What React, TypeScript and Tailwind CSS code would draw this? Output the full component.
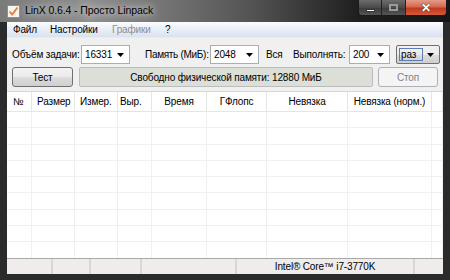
import React from "react";

/* ---------- Data ---------- */
const columns = [
  { label: "№", cls: "w-[25px] pl-[6px] justify-start" },
  { label: "Размер", cls: "w-[43px] pl-[5px] justify-start" },
  { label: "Измер.", cls: "w-[43px] pl-[5px] justify-start" },
  { label: "Выр.", cls: "w-[34px] pl-[2px] justify-start" },
  { label: "Время", cls: "w-[55px] justify-center" },
  { label: "ГФлопс", cls: "w-[60px] justify-center" },
  { label: "Невязка", cls: "w-[81px] justify-center" },
  { label: "Невязка (норм.)", cls: "w-[84px] justify-center" },
  { label: "", cls: "flex-1" },
];

const rowCount = 9;

/* ---------- Small parts ---------- */
function Arrow() {
  return (
    <svg width="7" height="4" viewBox="0 0 7 4" className="shrink-0">
      <path d="M0 0h7L3.5 4z" fill="#000" />
    </svg>
  );
}

function Combo({ value, cls }: { value: string; cls: string }) {
  return (
    <div
      className={`flex items-center h-[19px] bg-white border border-[#abadb3] pl-[3px] pr-[5px] ${cls}`}
    >
      <span className="flex-1">{value}</span>
      <Arrow />
    </div>
  );
}

function TitleIcon() {
  return (
    <svg width="13" height="13" viewBox="0 0 13 13">
      <rect x="0.5" y="0.5" width="12" height="12" fill="#f4f4f4" stroke="#8e8f8f" />
      <path d="M2.5 6.5l2.6 3L10.5 2.5" stroke="#f0782a" strokeWidth="1.8" fill="none" />
    </svg>
  );
}

/* ---------- Component ---------- */
export default function App() {
  return (
    <div
      className="w-[450px] h-[280px] flex flex-col bg-[#2b2b2b] overflow-hidden text-[10px] tracking-[-0.15px] text-black whitespace-nowrap"
      style={{ fontFamily: '"Liberation Sans", Arial, sans-serif' }}
    >
      {/* Title bar */}
      <div className="h-[22px] flex items-start bg-[linear-gradient(90deg,#7a7a7a_0%,#8f8f8f_20%,#555_55%,#1e1e1e_80%,#161616_100%)]">
        <div className="flex items-center h-[22px] pl-[7px] gap-[5px]">
          <TitleIcon />
          <span className="text-[10.5px] tracking-[-0.1px] [text-shadow:0_0_6px_#dcdcdc,0_0_10px_#d0d0d0]">
            LinX 0.6.4 - Просто Linpack
          </span>
        </div>
        <div className="flex-1" />
        {/* Caption buttons */}
        <div className="flex h-[16px] mr-[3px] border border-t-0 border-[#1a1a1a] rounded-b-[4px] overflow-hidden">
          <div className="w-[23px] flex items-center justify-center bg-[linear-gradient(180deg,#6d6d6d,#4a4a4a_50%,#3a3a3a_51%,#555)] border-r border-[#222]">
            <div className="w-[9px] h-[3px] mt-[5px] bg-white border border-[#333]" />
          </div>
          <div className="w-[24px] flex items-center justify-center bg-[linear-gradient(180deg,#6d6d6d,#4a4a4a_50%,#3a3a3a_51%,#555)] border-r border-[#222]">
            <div className="w-[9px] h-[7px] border-[2px] border-[#9a9a9a]" />
          </div>
          <div className="w-[40px] flex items-center justify-center bg-[linear-gradient(180deg,#e59a88,#d46a50_45%,#c2381c_55%,#d35a3a)]">
            <span className="text-white font-bold text-[12px] leading-none [text-shadow:0_0_1px_#333,0_0_1px_#333]">
              ✕
            </span>
          </div>
        </div>
      </div>

      {/* Client area */}
      <div className="mx-[7px] w-[436px] h-[252px] flex flex-col bg-[#f0f0f0]">
        {/* Menu */}
        <div className="h-[16px] flex items-center bg-[linear-gradient(180deg,#fbfcfe,#e6ecf6_60%,#dae2f0)] border-b border-[#e8ecf2]">
          <span className="w-[37px] pl-[6px]">Файл</span>
          <span className="w-[62px] pl-[6px]">Настройки</span>
          <span className="w-[53px] pl-[6px] text-[#8d8d8d]">Графики</span>
          <span className="pl-[6px]">?</span>
        </div>

        {/* Row 1 */}
        <div className="flex items-center mt-[7px] h-[19px]">
          <span className="ml-[5px] w-[69px]">Объём задачи:</span>
          <Combo value="16331" cls="w-[49px]" />
          <span className="ml-[15px] w-[65px] tracking-[-0.3px]">Память (МиБ):</span>
          <Combo value="2048" cls="w-[49px]" />
          <span className="ml-[7px] w-[27px]">Вся</span>
          <span className="w-[56px]">Выполнять:</span>
          <Combo value="200" cls="w-[41px]" />
          <div className="ml-[6px] w-[44px] h-[19px] flex items-center pl-[2px] pr-[5px] rounded-[2px] border border-[#707070] bg-[linear-gradient(180deg,#f2f2f2,#ebebeb_50%,#dddddd_51%,#cfcfcf)]">
            <span className="flex-1 border border-[#5b7fb0] px-[1px] mr-[4px] leading-[11px]">раз</span>
            <Arrow />
          </div>
        </div>

        {/* Row 2 */}
        <div className="flex items-center mt-[3px] h-[20px]">
          <div className="ml-[5px] w-[61px] h-[20px] flex items-center justify-center rounded-[3px] border border-[#707070] bg-[linear-gradient(180deg,#f2f2f2,#ebebeb_50%,#dddddd_51%,#cfcfcf)]">
            Тест
          </div>
          <div className="ml-[6px] w-[294px] h-[20px] flex items-center justify-center rounded-[2px] border border-[#bcbcbc] bg-[#dcdfd8]">
            Свободно физической памяти: 12880 МиБ
          </div>
          <div className="ml-[5px] w-[60px] h-[20px] flex items-center justify-center rounded-[3px] border border-[#adb2b5] bg-[#f4f4f4] text-[#838383]">
            Стоп
          </div>
        </div>

        {/* List */}
        <div className="mt-[4px] flex-1 flex flex-col bg-white border-t border-[#d5d5d5] overflow-hidden">
          <div className="h-[20px] flex shrink-0 border-b border-[#e5e5e5]">
            {columns.map((c, i) => (
              <div
                key={i}
                className={`flex items-center border-r border-[#e5e5e5] ${c.cls}`}
              >
                {c.label}
              </div>
            ))}
          </div>
          {Array.from({ length: rowCount }).map((_, r) => (
            <div key={r} className="h-[16.3px] flex shrink-0 border-b border-[#f0f0f0]">
              {columns.map((c, i) => (
                <div key={i} className={`border-r border-[#f0f0f0] ${c.cls}`} />
              ))}
            </div>
          ))}
        </div>

        {/* Status bar */}
        <div className="h-[16px] shrink-0 flex bg-[#efeceb] border-t border-[#a9a9a9]">
          <div className="w-[46px] shrink-0 border-r-2 border-[#d9d6d4]" />
          <div className="w-[38px] shrink-0 border-r-2 border-[#d9d6d4]" />
          <div className="w-[51px] shrink-0 border-r-2 border-[#d9d6d4]" />
          <div className="w-[95px] shrink-0 border-r-2 border-[#d9d6d4]" />
          <div className="w-[178px] shrink-0 flex items-center justify-center border-r-2 border-[#d9d6d4]">
            Intel® Core™ i7-3770K
          </div>
          <div className="flex-1" />
        </div>
      </div>
      <div className="flex-1" />
    </div>
  );
}
